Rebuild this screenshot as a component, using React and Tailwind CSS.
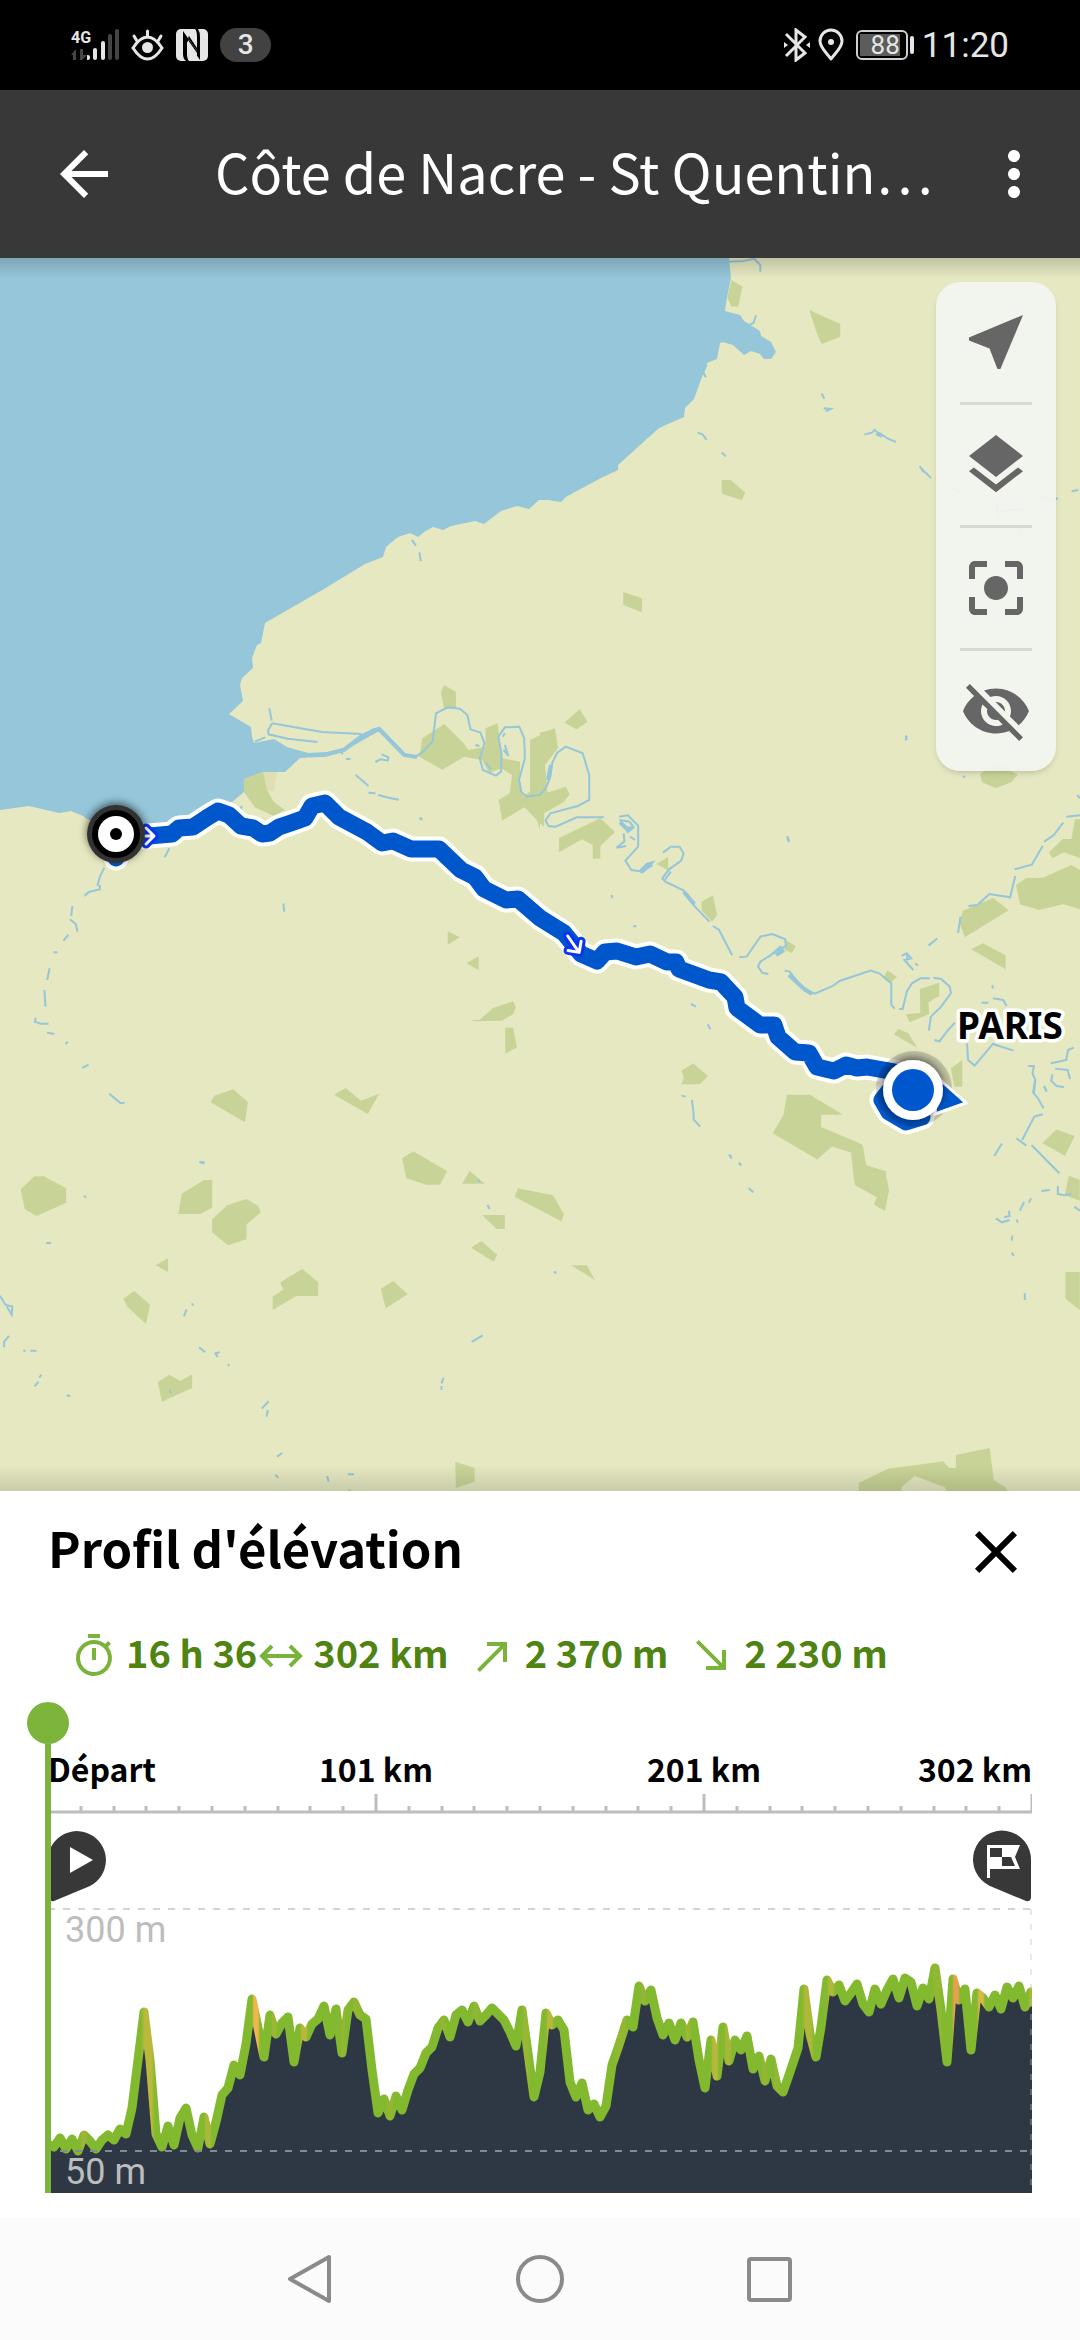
import React, { useState } from 'react';
import {
  MdArrowBack,
  MdMoreVert,
  MdNearMe,
  MdLayers,
  MdCenterFocusStrong,
  MdVisibilityOff,
  MdClose,
  MdOutlineTimer,
  MdCallMade,
  MdSouthEast,
} from 'react-icons/md';

const SANS = "font-['Noto_Sans_CJK_KR','Noto_Sans',sans-serif]";

// Sea, forests and rivers, grouped by map tile
const seaPath =
  'M0 250H729V258L731 278L727 297L725 311L740 315L744 321L760 331L761 336L771 342L776 352L771 359L764 359L760 354L751 351L744 355L733 345L723 342L720 343L717 359L707 363L694 399L685 408L684 417L668 424L659 428L618 465L618 470L601 478L573 493L570 495L567 496L561 502L548 500L539 500L529 509L517 506L501 511L484 524L475 521L451 526L443 530L433 527L424 532L418 537L410 533L398 537L386 547L383 557L365 564L324 589L265 623L261 643L257 645L252 658L253 668L242 678L240 685L243 701L229 714L251 727L252 737L254 743L274 739L287 747L308 753L327 752L343 748L360 735L374 728L380 727L384 731L405 753L415 757L404 755L379 731L344 751L319 757L300 758L285 772L263 772L244 779L244 792L232 802L212 806L190 822L170 830L120 834L89 820L83 816L71 811L59 813L29 806L0 810Z';

const tiles = [
  {
    id: 'north',
    transform: 'translate(0 250) scale(.6887 .3954)',
    forests:
      'M1062 76L1078 92L1072 143H1062L1056 120ZM1175 152L1220 187V220L1193 238L1187 215ZM1048 582H1061L1082 613L1077 633L1048 616ZM905 865L932 881V916L905 898ZM645 1100L662 1117V1160H645L640 1120ZM1423 1326L1446 1295L1478 1328L1468 1346L1446 1361L1426 1346Z',
    water:
      'M1057 30L1080 28L1095 22L1104 38V55M1098 165L1094 185L1086 190M1026 290L1021 310L1025 322M1193 363L1197 376M1196 400L1206 402L1199 408M1013 462L1020 466L1026 480M1048 512L1054 522M1255 467L1266 462L1270 455L1280 472L1272 466M1276 462L1288 476L1301 486M1335 547L1342 560L1352 577M1338 556L1346 566M1556 610L1566 607M598 733L604 748M609 765L611 787M1316 1228L1315 1240M1144 1485L1146 1497M611 1436L612 1442M1381 598L1393 615M1512 622L1526 634L1536 628M1452 660L1486 656M1447 640L1450 672M1480 708L1484 724',
  },
  {
    id: 'west',
    transform: 'translate(0 700) scale(.3444 .3333)',
    forests:
      'M708 237L764 215L775 270L795 305L828 330L795 348L740 322L708 275ZM1226 115L1290 72L1345 128L1360 150L1410 140V85L1445 70L1452 130L1460 175L1510 185V240L1520 290L1568 250V370L1523 322L1458 362L1448 300L1480 280L1487 225L1455 205L1420 220L1400 180L1348 170L1284 209L1218 170ZM1286 0H1324V22H1290ZM1300 694L1335 712L1300 734ZM1355 790L1390 769V811ZM1366 960H1392L1432 924L1490 904L1498 922L1490 943L1458 962L1380 964ZM1467 983H1490L1501 1042L1467 1061ZM612 1207L622 1187L677 1168L720 1206L711 1267ZM970 1184L1003 1164L1048 1202L1101 1181L1068 1242Z',
    water:
      'M782 25L789 62M790 70L935 96L1050 102M790 70L778 92L780 103L835 116L922 126M740 125L770 112M1205 172L1228 155L1256 125L1266 40L1300 22L1335 26L1357 45L1366 88L1395 98L1407 130L1393 175L1402 210L1440 227L1455 215L1456 160L1447 110L1466 82L1508 80L1522 115L1524 175L1507 240L1513 275L1530 290L1568 284M1466 100L1460 110M1466 135L1476 168L1462 150M1380 135L1392 138M1410 188L1426 208M1090 186L1105 178L1126 182L1128 172L1108 163M988 150L995 163M1005 177H1018M1032 224L1070 258M1070 278L1090 280M1098 285L1135 295L1158 299M1218 355L1226 357M492 445L478 472M303 503L290 530L283 558M290 555V568L258 576L245 588M210 618L207 648M203 658L220 672L225 695M184 722L199 704M155 757H167M144 805L137 840M129 870L132 920M104 953L101 965L118 971H141M136 998L158 1002M190 1032L197 1025M239 1104L257 1094M317 1181L350 1210L362 1208M823 610L825 635M702 318L698 328M579 1387H593',
  },
  {
    id: 'east',
    transform: 'translate(540 700) scale(.3444 .3333)',
    forests:
      'M115 27L138 65L106 88L71 68ZM0 98L40 87L50 145L10 186L20 278L75 260L86 283L70 305L12 340V380L0 370ZM55 414L175 355L218 396L175 438V476H153V435L122 418L55 457ZM338 492L372 471V511ZM469 605L502 586L514 645L500 665L470 632ZM714 720L742 738L732 759L710 750ZM1008 811L1037 831L1015 850L997 835ZM1103 867L1159 848V888L1128 907L1130 942L1073 967L1063 943L1104 939ZM1040 987L1070 1000L1095 1043L1028 1003ZM1226 1081V1160H1203L1193 1105ZM1478 457L1518 417H1543L1553 358H1568V474L1520 457L1488 475ZM1382 555L1412 534L1460 533L1543 495L1568 510V628L1520 613L1448 630L1394 613ZM1228 632L1316 594L1361 631L1233 712L1218 668ZM1252 748L1286 730L1352 766V808ZM445 1090L488 1129L464 1152L411 1153L418 1134L411 1112ZM717 1184H784L880 1244H816V1281L935 1333L947 1396L1005 1414V1440H912L903 1358L848 1340L805 1379L676 1300L707 1244ZM1500 1289L1553 1308L1524 1368L1459 1329Z',
    water:
      'M0 284L18 262L30 230L35 190L50 158L75 140L124 160L143 225V300L110 318L30 340L16 362L25 378L45 380L107 352H185M230 350L255 346L285 377V440L248 482L265 510L300 515L327 487L310 492L290 512M230 360L260 365L272 382L255 396L240 370M243 400L245 425L222 443L250 438M262 410L276 420M357 458L380 440H405L417 460L410 482L375 508L355 535L365 546L415 570L450 620L492 665M380 515L362 540M415 570L450 610M502 678L520 690L558 766M579 771L600 770L640 710L675 702L712 718L714 738L690 752L640 785L633 800L645 818L663 822M700 738L665 770M710 812L725 815L760 865L798 881L850 858L870 843L960 812L985 820L1020 850V915L1030 926M730 822L770 875M1043 927H1053L1065 875L1080 850L1105 835H1132M1142 833L1165 837L1190 860L1193 880L1165 920L1135 950L1129 992M1145 1020L1160 1024L1185 990L1205 968M1050 768L1065 760L1078 775L1058 780L1084 810M1066 765V785M1090 790L1097 797M1128 737L1154 715M1214 699L1221 650M1244 618L1270 615L1305 582L1365 592L1380 528M1378 508L1428 494L1460 437M1464 425L1492 405L1519 368M1528 350L1568 346M1560 285L1568 295M1063 107L1065 120M1228 228L1234 232M718 408L721 424M207 585L211 594M270 679H280M438 912L453 920M487 973L495 988M1240 1030L1243 1080L1262 1097L1315 1032L1375 1052M1313 855L1315 866M1282 908H1302M1315 895L1345 900L1355 918M1418 1098H1434L1430 1120L1438 1140L1434 1180L1446 1195L1462 1225M1460 1243L1435 1250L1410 1300L1400 1320M1383 1315L1412 1337M1341 1331L1319 1368M1427 1335L1508 1420M1550 1043L1533 1050L1528 1080L1483 1090M1495 1106L1532 1110L1539 1138M1488 1123L1484 1142L1500 1158L1522 1162M1464 1158L1470 1172M411 1187L423 1190M441 1200L446 1240V1258L465 1280M549 1364L557 1373M577 1390L584 1396',
  },
  {
    id: 'south',
    transform: 'translate(0 1080) scale(.6887 .3333)',
    forests:
      'M30 328L50 289H64L96 325V368L53 408L36 388ZM264 341L296 300H308V383L291 402H259ZM308 418L330 376L358 357L375 378L379 397L358 433V478L331 496L308 457ZM584 235L600 214L649 273L639 314H619L590 295ZM671 311L682 273L704 311ZM747 350L752 325L803 346L819 403L815 424ZM700 405H733V447H721ZM684 503L699 483L722 524L717 545ZM226 556L244 535V576ZM179 656L195 633L218 674L212 732L185 680ZM407 607L439 567L462 607V648H430L396 690V650L411 629ZM553 626L571 603L592 643L560 685ZM829 556H852L864 600ZM229 907L246 884L262 903L279 883V924L235 965ZM1239 215L1253 196L1257 256L1285 275L1291 330L1285 393L1269 374L1273 352L1241 315ZM661 1145L689 1164V1205L662 1224ZM502 1236L509 1226L511 1236ZM1247 1208L1290 1166L1370 1144L1378 1164H1388V1125L1437 1104L1443 1200L1460 1222L1465 1240H1376L1372 1222L1328 1188L1309 1222V1240H1247ZM1552 287L1568 300V362L1546 346ZM1547 576H1568V690L1547 656ZM990 12L993 0H1020L1013 13Z',
    water:
      'M290 246L297 250M122 347L125 353M67 489H74M708 375L711 387M694 300L697 306M1059 224L1062 236M1073 248L1076 256M1087 325L1094 337M804 575L808 579M0 647L8 675L18 680L17 704L10 680M279 670L280 677M271 688L267 709M13 768L6 785V802M34 810L37 815M44 812H53M289 802L298 817M319 817L313 820L316 832M331 852L333 858M685 786L701 766M60 885L57 893M56 905L50 919M97 945L102 949M644 894L641 910M641 918V929M390 964L380 986M389 990L387 1010M410 1119L402 1130M400 1184L404 1194M475 1188L477 1205M505 1183H514M246 930L248 940M1512 333L1524 330M1536 318V342L1546 346L1556 342M1497 355L1494 368M1487 366L1481 392M1465 392L1466 408L1458 412M1446 415L1455 427L1466 420M1476 418L1478 428M1470 467L1469 482M1469 518L1472 528M1488 640V660M1560 380L1568 392M1503 0L1500 40M1516 20L1520 35',
  },
];

const routePath =
  'M116 858L120 838L149 836L172 834L179 828L193 827L208 817L218 811L229 815L241 826L253 828L262 834L270 833L279 827L291 823L305 818L312 806L325 803L339 817L367 832L382 843L393 841L411 849L439 849L461 870L475 877L484 889L506 900L518 899L540 918L564 933L581 954L597 961L605 952L617 951L636 957L650 954L667 962L676 962L679 969L709 980L721 982L735 997L737 1008L760 1025L774 1025L778 1037L795 1052L809 1053L817 1067L834 1071L846 1065L857 1068L867 1067L895 1072L893 1086L882 1100L889 1112L906 1122L922 1117';

// Elevation samples in metres: each run starts at x and advances by 6
const profileRuns = [
  [6, [
    54, 63, 52, 62, 50, 67, 60, 52, 61, 67, 61, 73, 68, 94, 144, 194, 144, 68, 54, 76, 56, 84, 94, 67,
    53, 85, 57, 80, 108, 115, 139, 129, 161, 207, 177, 147, 191, 171, 182, 188, 142, 177, 168, 181, 186,
    200, 170, 197, 151, 196, 204, 190, 186, 134, 89, 104, 86, 107, 92, 113, 130, 136, 151, 157, 177, 185,
    168, 190, 196, 183, 200, 184, 190, 198, 192, 185, 173, 158, 196, 151, 106, 132, 193, 180, 185, 175,
    121, 106, 120, 92, 99, 85, 96, 139, 156,
  ]],
  [579, [
    185, 178, 220, 205, 216, 187, 170, 182, 165, 182, 168, 183, 144, 115, 165, 127, 178, 143, 165, 154,
    169, 135, 148, 122, 145, 117, 111, 128,
  ]],
  [750, [156, 217, 171, 147]],
  [773, [
    178, 227, 214, 222, 205, 213, 223, 202, 194, 217, 202, 216, 228, 208, 229, 225, 200, 218, 207, 239,
    196, 142, 228, 206, 217, 154, 213, 208, 199, 211, 197, 219, 208, 220, 199, 214,
  ]],
];

const toY = (m) => Math.round(249 - (m - 50) * 0.968);
const profilePoints = [
  [0, toY(57)],
  ...profileRuns.flatMap(([start, values]) => values.map((m, i) => [start + i * 6, toY(m)])),
  [986, toY(200)],
];
const profileLine = 'M' + profilePoints.map((p) => p.join(' ')).join('L');

// Steep stretches: centre, half width, colour
const steepParts = [
  [36, 4, '#9bb735'],
  [100, 7, '#bab93c'],
  [160, 4, '#a9b839'],
  [208, 4, '#efb64e'],
  [226, 3, '#9bb735'],
  [256, 4, '#b9b83c'],
  [295, 3, '#93b733'],
  [309, 5, '#93b733'],
  [342, 4, '#93b733'],
  [395, 3, '#93b733'],
  [428, 3, '#93b733'],
  [478, 4, '#98b734'],
  [502, 4, '#b9b83c'],
  [573, 7, '#93b733'],
  [595, 3, '#93b733'],
  [640, 3, '#9bb735'],
  [667, 4, '#b9b83c'],
  [680, 4, '#a5b838'],
  [717, 3, '#93b733'],
  [729, 3, '#93b733'],
  [760, 6, '#aeb839'],
  [783, 4, '#b0b83a'],
  [889, 5, '#93b733'],
  [908, 4, '#e8a04c'],
  [933, 4, '#d8b948'],
  [983, 3, '#a0b838'],
];

function StatusBar() {
  return (
    <div className="flex h-[90px] items-center justify-between bg-black px-[71px] font-[Roboto,sans-serif] text-[#e6e6e6]">
      <div className="flex items-center gap-3">
        <div className="flex">
          <div className="flex flex-col items-start">
            <span className="text-[16px] leading-5 font-bold">4G</span>
            <svg width="18" height="14" viewBox="0 0 18 14" fill="#454545">
              <path d="M5 12V2H4L0 7H2V12ZM9 1V12H11L16 7H12V1Z" />
            </svg>
          </div>
          <svg width="32" height="34" viewBox="18 0 32 34" strokeWidth="4" strokeLinecap="round" className="-ml-1">
            <path d="M19 29V30M26 22V30M34 15V30" stroke="#e6e6e6" />
            <path d="M41 8V30M48 3V30" stroke="#454545" />
          </svg>
        </div>
        <svg width="33" height="34" viewBox="0 0 33 34" fill="none" stroke="#e6e6e6" strokeWidth="3" strokeLinecap="round" role="img" aria-label="Confort visuel">
          <path d="M2 20Q9 9 16.500 9T31 20Q24 31 16.500 31T2 20Z" />
          <path d="M16.500 3V9M3 8L6 13M30 8L27 13" />
          <circle cx="16.500" cy="19.500" r="5.500" fill="#e6e6e6" stroke="none" />
        </svg>
        <svg width="32" height="34" viewBox="0 0 32 34" role="img" aria-label="NFC">
          <rect y="1" width="32" height="32" rx="5" fill="#e6e6e6" />
          <path d="M7 3L21 23V9Q21 3 19 1H22Q24 4 24 9V32L11 13V26Q11 31 13 33H10Q7 31 7 26Z" fill="#000" />
          <path d="M12 10L21 23V20L13 8Z" fill="#000" />
          <path d="M12 17V12L21 25V28Z" fill="#e6e6e6" />
        </svg>
        <span className="flex h-[34px] w-[51px] items-center justify-center rounded-full bg-[#424242] text-[28px] font-medium">3</span>
      </div>
      <div className="flex items-center gap-2">
        <svg width="26" height="34" viewBox="0 0 26 34" fill="none" stroke="#e6e6e6" strokeWidth="3" role="img" aria-label="Bluetooth">
          <path d="M2 6L21 25L12 32V2L21 9L2 28" />
          <path d="M0 14L4 17L0 20ZM26 14L22 17L26 20Z" fill="#e6e6e6" stroke="none" />
        </svg>
        <svg width="26" height="34" viewBox="0 0 26 34" fill="none" stroke="#e6e6e6" strokeWidth="3" role="img" aria-label="Position">
          <path d="M13 31C9 25 2 20 2 13A11 11 0 0 1 24 13C24 20 17 25 13 31Z" strokeLinejoin="round" />
          <circle cx="13" cy="14" r="3" fill="#e6e6e6" stroke="none" />
        </svg>
        <div className="ml-1 flex items-center gap-0.5">
          <div className="flex h-[30px] w-[52px] items-center rounded-md border-2 border-[#cfcfcf] p-0.5">
            <span className="flex h-full w-10 items-center justify-end bg-[#5c5c5c] text-[26px] leading-none">88</span>
          </div>
          <span className="h-[18px] w-1 rounded-full bg-[#e6e6e6]" />
        </div>
        <span className="text-[35px] leading-none">11:20</span>
      </div>
    </div>
  );
}

function AppBar() {
  return (
    <header className={`flex h-[168px] items-center bg-[#383838] px-[30px] text-white ${SANS}`}>
      <button type="button" aria-label="Retour" className="px-[18px]">
        <MdArrowBack size={72} />
      </button>
      <h1 className="ml-[77px] flex-1 truncate pb-2 text-[54px]">Côte de Nacre - St Quentin…</h1>
      <button type="button" aria-label="Plus d'options">
        <MdMoreVert size={72} />
      </button>
    </header>
  );
}

function RouteArrow({ transform }) {
  return (
    <g transform={transform} fill="none" strokeLinecap="round" strokeLinejoin="round">
      <path d="M-11 0H8M1 -8L9 0L1 8" stroke="#0a35f0" strokeWidth="9" />
      <path d="M-11 0H8M1 -8L9 0L1 8" stroke="#fff" strokeWidth="3" />
    </g>
  );
}

function MapView() {
  return (
    <div className="relative bg-[#e5e8c0]">
      <svg viewBox="0 258 1080 1233" className="block h-auto w-full" role="img" aria-label="Carte de l'itinéraire">
        <defs>
          <filter id="markerShadow" x="-50%" y="-50%" width="200%" height="200%">
            <feDropShadow dx="0" dy="-2" stdDeviation="4" floodOpacity=".6" />
          </filter>
          <linearGradient id="topShade" x1="0" y1="0" x2="0" y2="1">
            <stop offset="0" stopOpacity=".16" />
            <stop offset="1" stopOpacity="0" />
          </linearGradient>
          <linearGradient id="bottomShade" x1="0" y1="1" x2="0" y2="0">
            <stop offset="0" stopOpacity=".12" />
            <stop offset="1" stopOpacity="0" />
          </linearGradient>
        </defs>
        <path d={seaPath} fill="#95c6d9" />
        <path d="M263 772L277 772L274 791H267Z" fill="#e0dfb4" />
        {tiles.map((tile) => (
          <g key={tile.id} transform={tile.transform}>
            <path d={tile.forests} fill="#c8d497" />
          </g>
        ))}
        <path d="M530 740L555 728L558 748L545 765L548 798L540 800V830L530 798Z" fill="#c8d497" />
        {tiles.map((tile) => (
          <g key={tile.id} transform={tile.transform}>
            <path d={tile.water} fill="none" stroke="#95c6d9" strokeWidth="2" vectorEffect="non-scaling-stroke" />
          </g>
        ))}
        {/* Wider stretches of the Seine */}
        <path
          d="M300 755L325 755L344 750L361 737L379 729L404 755L417 757M620 822L627 829L632 828M640 872L652 864M684 892L694 904M789 975L803 988L812 994M776 955L784 950M548 780L551 765"
          fill="none"
          stroke="#95c6d9"
          strokeWidth="4"
        />
        <g fill="none" strokeLinejoin="round" strokeLinecap="round">
          <path d={routePath} stroke="#fff" strokeWidth="25" />
          <path d={routePath} stroke="#0057cc" strokeWidth="17" />
        </g>
        <RouteArrow transform="translate(145 836)" />
        <RouteArrow transform="translate(574 945) rotate(55)" />

        {/* Start marker */}
        <g filter="url(#markerShadow)">
          <circle cx="116" cy="834" r="29" fill="#333" />
          <circle cx="116" cy="834" r="24" fill="#000" />
          <circle cx="116" cy="834" r="18" fill="#fff" />
          <circle cx="116" cy="834" r="6" fill="#000" />
        </g>

        {/* Current position */}
        <circle cx="914" cy="1089" r="38" fill="#000" fillOpacity=".16" />
        <path d="M938 1078L966 1103L935 1114Z" fill="#0057cc" stroke="#fff" strokeWidth="3" />
        <g filter="url(#markerShadow)">
          <circle cx="913" cy="1090" r="30" fill="#fff" />
          <circle cx="913" cy="1090" r="21" fill="#0057cc" />
        </g>

        <text
          x="957"
          y="1039"
          fontSize="37"
          fontWeight="700"
          stroke="#fff"
          strokeWidth="7"
          strokeLinejoin="round"
          paintOrder="stroke"
          className="font-['Noto_Sans',sans-serif]"
        >
          PARIS
        </text>
        <rect y="258" width="1080" height="20" fill="url(#topShade)" />
        <rect y="1465" width="1080" height="26" fill="url(#bottomShade)" />
      </svg>

      <div className="absolute top-6 right-6 flex w-[120px] flex-col items-center rounded-3xl bg-[#f3f5f0]/93 text-[#666] shadow-md">
        <MapTool label="Ma position" icon={<MdNearMe size={72} />} />
        <span className="h-[3px] w-[72px] bg-[#d7d9d2]" />
        <MapTool label="Fonds de carte" icon={<MdLayers size={72} />} />
        <span className="h-[3px] w-[72px] bg-[#d7d9d2]" />
        <MapTool label="Recentrer" icon={<MdCenterFocusStrong size={72} />} />
        <span className="h-[3px] w-[72px] bg-[#d7d9d2]" />
        <MapTool label="Masquer" icon={<MdVisibilityOff size={72} />} />
      </div>
    </div>
  );
}

function MapTool({ label, icon }) {
  return (
    <button type="button" aria-label={label} className="flex h-[120px] w-full items-center justify-center">
      {icon}
    </button>
  );
}

function Stat({ icon, value }) {
  return (
    <div className="flex items-start gap-2 text-[#7ab33a]">
      {icon}
      <span className="text-[38px] leading-10 font-bold whitespace-nowrap text-[#4f8412]">{value}</span>
    </div>
  );
}

function DistanceIcon() {
  return (
    <svg width="48" height="48" viewBox="0 0 48 48" fill="none" stroke="currentColor" strokeWidth="4">
      <path d="M6 24H42M15 14L5 24L15 34M33 14L43 24L33 34" />
    </svg>
  );
}

function Ruler() {
  const ticks = Array.from({ length: 30 }, (_, i) => i + 1);
  return (
    <svg viewBox="0 0 984 20" className="block h-auto w-full" stroke="#bdbdbd" strokeWidth="3">
      <path d="M0 18H984" />
      {ticks.map((i) => (
        <path key={i} d={`M${Math.round(i * 32.8)} ${i % 10 === 0 ? 0 : 12}V18`} />
      ))}
    </svg>
  );
}

function ElevationChart() {
  const [position, setPosition] = useState(0);

  return (
    <div className="relative mt-[22px] pt-10">
      <div className="grid grid-cols-6 text-[32px] leading-[52px] font-bold whitespace-nowrap text-black">
        <span>Départ</span>
        <span className="col-span-2 text-center">101 km</span>
        <span className="col-span-2 text-center">201 km</span>
        <span className="text-right">302 km</span>
      </div>
      <Ruler />
      <div className="mt-4 flex justify-between">
        <svg width="60" height="72" viewBox="0 0 60 72">
          <path d="M0 28A29 29 0 1 1 42 56L6 71Q2 72 2 68Z" fill="#383838" />
          <path d="M22 17L45 30L22 43Z" fill="#fff" />
        </svg>
        <svg width="60" height="72" viewBox="0 0 60 72">
          <path d="M59 30A29 29 0 1 0 18 56L54 71Q59 72 59 67Z" fill="#383838" />
          <path d="M15 15H48L43 27L48 39H18V48H15ZM18 18V27H30V18ZM30 27V36H43L39 27Z" fill="#fff" fillRule="evenodd" />
        </svg>
      </div>
      <svg viewBox="0 0 984 291" className="block h-auto w-full" role="img" aria-label="Profil d'élévation">
        <defs>
          <linearGradient id="slope" gradientUnits="userSpaceOnUse" x1="0" y1="0" x2="984" y2="0">
            {steepParts.flatMap(([x, w, color]) => [
              <stop key={`${x}a`} offset={(x - w) / 984} stopColor="#82b92e" />,
              <stop key={`${x}b`} offset={(x - w / 2) / 984} stopColor={color} />,
              <stop key={`${x}c`} offset={(x + w / 2) / 984} stopColor={color} />,
              <stop key={`${x}d`} offset={(x + w) / 984} stopColor="#82b92e" />,
            ])}
          </linearGradient>
        </defs>
        <path d="M0 7H984" stroke="#d4d4d4" strokeWidth="2" strokeDasharray="7 8" />
        <path d={`${profileLine}V291H0Z`} fill="#2d3844" />
        <path d={profileLine} fill="none" stroke="url(#slope)" strokeWidth="9" strokeLinejoin="round" />
        <path d="M12 249H984" stroke="#858b91" strokeWidth="2" strokeDasharray="7 8" />
        <path d="M983 7V291" stroke="#bdbdbd" strokeOpacity=".7" strokeWidth="1" strokeDasharray="6 9" />
        <g fontSize="36" className="font-[Roboto,sans-serif]">
          <text x="17" y="40" fill="#bdbdbd">300 m</text>
          <text x="17" y="282" fill="#bdbdbd">50 m</text>
        </g>
      </svg>

      {/* Cursor */}
      <div
        className="pointer-events-none absolute inset-y-0 -ml-[21px] flex w-[42px] flex-col items-center"
        style={{ left: `${(position / 302) * 100}%` }}
      >
        <span className="h-[42px] w-[42px] rounded-full bg-[#7cb43c]" />
        <span className="w-[6px] flex-1 bg-[#7cb43c]" />
      </div>
      <input
        type="range"
        min="0"
        max="302"
        value={position}
        onChange={(e) => setPosition(Number(e.target.value))}
        aria-label="Position sur le parcours (km)"
        className="absolute inset-0 h-full w-full cursor-pointer opacity-0"
      />
    </div>
  );
}

function ElevationSheet() {
  return (
    <section className={`bg-white px-12 pt-[25px] pb-[25px] ${SANS}`}>
      <div className="flex items-start justify-between">
        <h2 className="text-[49px] leading-[62px] font-bold text-black">Profil d'élévation</h2>
        <button type="button" aria-label="Fermer" className="text-black">
          <MdClose size={72} />
        </button>
      </div>
      <div className="mt-11 flex gap-5 pl-[22px]">
        <div className="flex">
          <Stat icon={<MdOutlineTimer size={48} />} value="16 h 36" />
          <Stat icon={<DistanceIcon />} value="302 km" />
        </div>
        <Stat icon={<MdCallMade size={48} />} value="2 370 m" />
        <Stat icon={<MdSouthEast size={48} />} value="2 230 m" />
      </div>
      <ElevationChart />
    </section>
  );
}

function NavBar() {
  return (
    <nav className="flex h-[122px] items-center justify-center bg-[#fbfbfb] text-[#8a8a8a]">
      <button type="button" aria-label="Précédent" className="flex w-[230px] justify-center">
        <svg width="50" height="50" viewBox="0 0 50 50" fill="none" stroke="currentColor" strokeWidth="4" strokeLinejoin="round">
          <path d="M44 3V47L5 25Z" />
        </svg>
      </button>
      <button type="button" aria-label="Accueil" className="flex w-[230px] justify-center">
        <svg width="50" height="50" viewBox="0 0 50 50" fill="none" stroke="currentColor" strokeWidth="4">
          <circle cx="25" cy="25" r="22" />
        </svg>
      </button>
      <button type="button" aria-label="Applications récentes" className="flex w-[230px] justify-center">
        <svg width="50" height="50" viewBox="0 0 50 50" fill="none" stroke="currentColor" strokeWidth="4">
          <rect x="4" y="5" width="41" height="41" rx="2" />
        </svg>
      </button>
    </nav>
  );
}

export default function App() {
  return (
    <div className="min-h-screen bg-white">
      <StatusBar />
      <AppBar />
      <MapView />
      <ElevationSheet />
      <NavBar />
    </div>
  );
}
